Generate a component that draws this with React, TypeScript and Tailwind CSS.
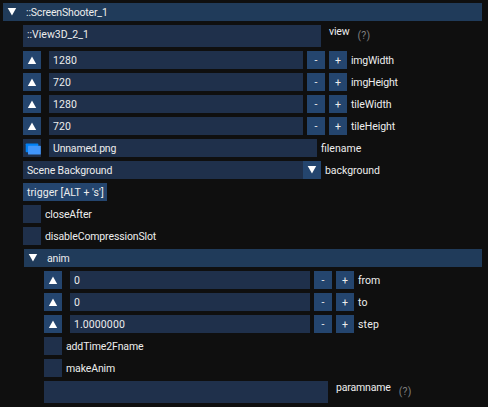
import type { ReactNode } from "react";

function Triangle({ down = false }: { down?: boolean }) {
  return (
    <svg className="block h-[18px] w-[18px] shrink-0" viewBox="0 0 18 18">
      <path d={down ? "M4.7 5.1H13.2L9 12.4Z" : "M9 5.6L13.2 13H4.8Z"} fill="#fff" />
    </svg>
  );
}

function Header({ label, nested = false }: { label: string; nested?: boolean }) {
  return (
    <div className={`flex h-[18px] items-center bg-[#203b5a] ${nested ? "ml-[21px]" : ""}`}>
      <Triangle down />
      <span className="ml-[5px] pt-0.5 tracking-[-0.16px]">{label}</span>
    </div>
  );
}

function Step({ children }: { children: ReactNode }) {
  return (
    <span className="ml-1 flex h-[18px] w-[18px] items-center justify-center bg-[#24456e] pt-0.5">{children}</span>
  );
}

type NumberRowProps = { value: string; label: string; tracking?: string; nested?: boolean };

function NumberRow({ value, label, tracking = "tracking-[-0.07px]", nested = false }: NumberRowProps) {
  return (
    <div className="flex h-[18px] items-center">
      <span className="bg-[#24456e]"><Triangle /></span>
      <span className={`ml-2 h-[18px] bg-[#1f304b] pl-1 leading-[20px] tracking-[0.1px] ${nested ? "w-[240px]" : "w-[254px]"}`}>{value}</span>
      <Step>-</Step>
      <Step>+</Step>
      <span className={`ml-1 pt-0.5 ${tracking}`}>{label}</span>
    </div>
  );
}

function CheckRow({ label }: { label: string }) {
  return (
    <div className="flex h-[18px] items-center">
      <span className="h-[18px] w-[18px] bg-[#1f304b]" />
      <span className="ml-1 pt-0.5 tracking-[-0.13px]">{label}</span>
    </div>
  );
}

function TextRow({ value, label, nested = false }: { value: string; label: string; nested?: boolean }) {
  return (
    <div className="flex h-[22px] items-start">
      <span className={`h-[22px] bg-[#1f304b] pl-1 leading-[20px] ${nested ? "w-[284px]" : "w-[298px]"}`}>{value}</span>
      <span className="ml-2 leading-[14px] tracking-[-0.16px]">{label}</span>
      <span className="ml-2 pt-1 leading-[13px] tracking-[0.2px] text-[#7f7f7f]">(?)</span>
    </div>
  );
}

function FolderIcon() {
  return (
    <svg className="block h-[18px] w-[18px] bg-[#1f304b]" viewBox="0 0 18 18">
      <rect x="2.7" y="4.5" width="12.6" height="8.8" rx="0.7" fill="#0080f5" />
      <rect x="5" y="6.8" width="12.8" height="8.8" rx="0.7" fill="#4296fa" />
    </svg>
  );
}

export default function App() {
  return (
    <main className="h-[407px] w-[488px] overflow-hidden bg-[#0f0f0f] py-[3px] pr-[6px] pl-[3px] font-['Roboto',sans-serif] text-[10.5px] leading-[18px] whitespace-pre text-[#ededed]">
      <div className="flex flex-col gap-1">
        <Header label="::ScreenShooter_1" />
        <div className="flex flex-col gap-1 pl-5">
          <TextRow value="::View3D_2_1" label="view" />
          <NumberRow value="1280" label="imgWidth" tracking="tracking-[-0.22px]" />
          <NumberRow value="720" label="imgHeight" tracking="tracking-[-0.18px]" />
          <NumberRow value="1280" label="tileWidth" />
          <NumberRow value="720" label="tileHeight" />
          <div className="flex h-[18px] leading-[20px]">
            <FolderIcon />
            <span className="ml-2 w-[268px] bg-[#1f304b] pl-1 tracking-[-0.18px]">Unnamed.png</span>
            <span className="ml-1">filename</span>
          </div>
          <div className="flex h-[18px] leading-[20px]">
            <span className="w-[280px] bg-[#1f304b] pl-1 tracking-[-0.11px]">Scene Background</span>
            <span className="bg-[#24456e]"><Triangle down /></span>
            <span className="ml-1 tracking-[-0.03px]">background</span>
          </div>
          <button className="h-[18px] w-[84px] bg-[#24456e] pl-1 text-left leading-[20px] tracking-[0.06px]">trigger [ALT + 's']</button>
          <CheckRow label="closeAfter" />
          <CheckRow label="disableCompressionSlot" />
        </div>
        <Header label="anim" nested />
        <div className="flex flex-col gap-1 pl-[41px]">
          <NumberRow value="0" label="from" nested />
          <NumberRow value="0" label="to" tracking="tracking-[0.2px]" nested />
          <NumberRow value="1.0000000" label="step" tracking="tracking-[0.2px]" nested />
          <CheckRow label="addTime2Fname" />
          <CheckRow label="makeAnim" />
          <TextRow value="" label="paramname" nested />
        </div>
      </div>
    </main>
  );
}
